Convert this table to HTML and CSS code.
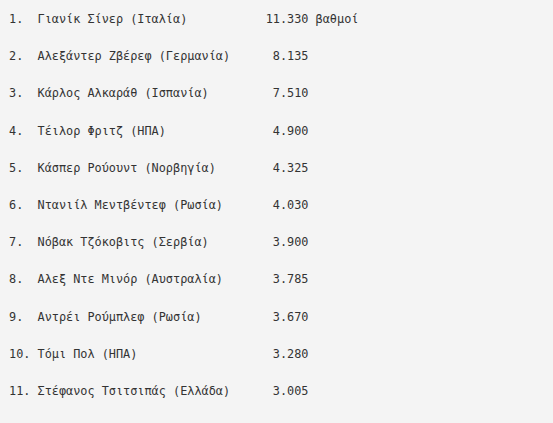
FILE: index.html
```html
<!DOCTYPE html>
<html lang="el">
<head>
<meta charset="utf-8">
<title>Κατάταξη</title>
<link rel="stylesheet" href="styles.css">
</head>
<body>
<pre class="ranking">1.  Γιανίκ Σίνερ (Ιταλία)           11.330 βαθμοί

2.  Αλεξάντερ Ζβέρεφ (Γερμανία)      8.135

3.  Κάρλος Αλκαράθ (Ισπανία)         7.510

4.  Τέιλορ Φριτζ (ΗΠΑ)               4.900

5.  Κάσπερ Ρούουντ (Νορβηγία)        4.325

6.  Ντανιίλ Μεντβέντεφ (Ρωσία)       4.030

7.  Νόβακ Τζόκοβιτς (Σερβία)         3.900

8.  Αλεξ Ντε Μινόρ (Αυστραλία)       3.785

9.  Αντρέι Ρούμπλεφ (Ρωσία)          3.670

10. Τόμι Πολ (ΗΠΑ)                   3.280

11. Στέφανος Τσιτσιπάς (Ελλάδα)      3.005</pre>
</body>
</html>
```

FILE: styles.css
```css
html, body {
  margin: 0;
  padding: 0;
  background: #f4f4f4;
}

.ranking {
  margin: 0;
  padding: 10px 0 0 9px;
  font-family: "DejaVu Sans Mono", "Liberation Mono", monospace;
  font-size: 11.85px;
  line-height: 18.6px;
  color: #333333;
}
```
